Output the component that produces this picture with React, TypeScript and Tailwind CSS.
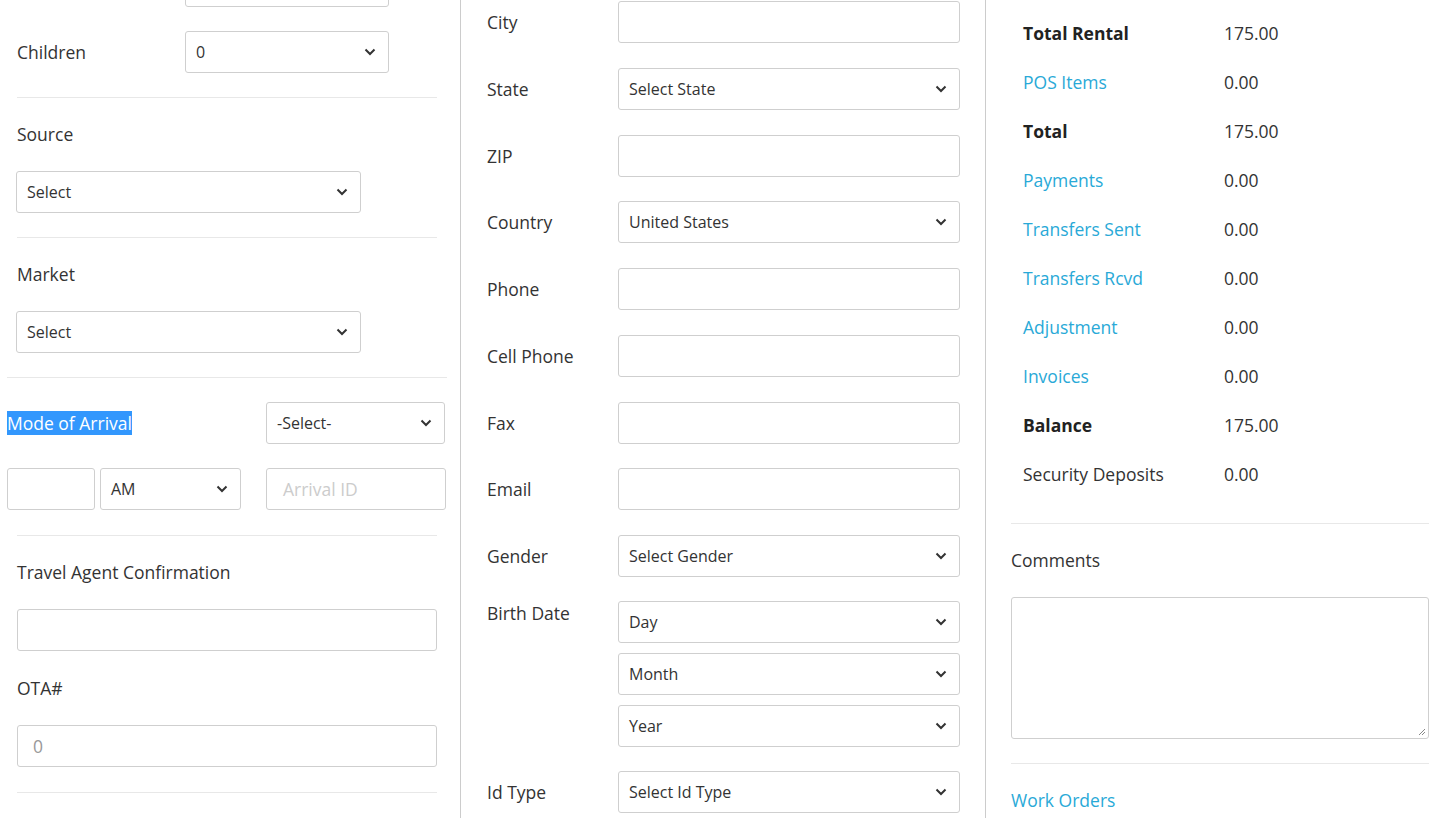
import React from "react";

const font = { fontFamily: '"Open Sans", "Liberation Sans", sans-serif' };

function Chevron() {
  return (
    <svg width="12" height="8" viewBox="0 0 12 8" className="shrink-0">
      <path d="M1.5 1.5 L6 6 L10.5 1.5" fill="none" stroke="#333" strokeWidth="2" />
    </svg>
  );
}

function Select({ value, className = "" }: { value: string; className?: string }) {
  return (
    <div
      className={`flex h-[42px] items-center justify-between rounded-[3px] border border-[#cfcfcf] bg-white pl-[10px] pr-[12px] text-[16px] text-[#333] ${className}`}
    >
      <span>{value}</span>
      <Chevron />
    </div>
  );
}

function Input({ placeholder = "", className = "", tone = "text-[#ccc]" }: { placeholder?: string; className?: string; tone?: string }) {
  return (
    <div
      className={`flex h-[42px] items-center rounded-[3px] border border-[#cfcfcf] bg-white px-[15px] text-[17.5px] ${tone} ${className}`}
    >
      {placeholder}
    </div>
  );
}

function Section({ label, children }: { label: string; children: React.ReactNode }) {
  return (
    <div className="border-t border-[#e8e8e8] pt-[24px] pb-[24px]">
      <div className="h-[24px] leading-[24px]">{label}</div>
      <div className="mt-[25px]">{children}</div>
    </div>
  );
}

function LeftColumn() {
  return (
    <div className="w-[461px] shrink-0 border-r border-[#cccccc] pl-[17px] pr-[23px]">
      <div className="-mt-[35px] flex items-center pb-[24px]">
        <div className="w-[168px]">Adults</div>
        <Select value="1" className="w-[204px]" />
      </div>
      <div className="flex items-center pb-[24px]">
        <div className="w-[168px]">Children</div>
        <Select value="0" className="w-[204px]" />
      </div>
      <Section label="Source">
        <Select value="Select" className="-ml-px w-[345px]" />
      </Section>
      <Section label="Market">
        <Select value="Select" className="-ml-px w-[345px]" />
      </Section>
      <div className="-mx-[10px] border-t border-[#e8e8e8] pt-[24px] pb-[25px]">
        <div className="flex items-center justify-between">
          <span className="bg-[#3297fd] leading-[24px] text-white">Mode of Arrival</span>
          <Select value="-Select-" className="mr-[2px] w-[179px]" />
        </div>
        <div className="mt-[24px] flex items-center">
          <Input className="w-[88px]" />
          <Select value="AM" className="ml-[5px] w-[141px]" />
          <Input placeholder="Arrival ID" className="ml-[25px] w-[180px] pl-[16px]" />
        </div>
      </div>
      <div className="border-t border-[#e8e8e8] pt-[24px] pb-[25px]">
        <div className="h-[24px] leading-[24px]">Travel Agent Confirmation</div>
        <Input className="mt-[25px]" />
        <div className="mt-[25px] h-[24px] leading-[24px]">OTA#</div>
        <Input placeholder="0" tone="text-[#999]" className="mt-[25px]" />
      </div>
      <div className="border-t border-[#e8e8e8]" />
    </div>
  );
}

function Row({ label, children, top = false, className = "" }: { label: string; children: React.ReactNode; top?: boolean; className?: string }) {
  return (
    <div className={`flex ${top ? "items-start" : "items-center"} ${className}`}>
      <div className="w-[131px] shrink-0 leading-[24px]">{label}</div>
      <div className="flex-1">{children}</div>
    </div>
  );
}

function MiddleColumn() {
  return (
    <div className="w-[525px] shrink-0 border-r border-[#cccccc] pl-[26px] pr-[25px]">
      <div className="flex flex-col gap-[24.75px] pt-[1px]">
        <Row label="City">
          <Input />
        </Row>
        <Row label="State">
          <Select value="Select State" />
        </Row>
        <Row label="ZIP">
          <Input />
        </Row>
        <Row label="Country">
          <Select value="United States" />
        </Row>
        <Row label="Phone">
          <Input />
        </Row>
        <Row label="Cell Phone">
          <Input />
        </Row>
        <Row label="Fax">
          <Input />
        </Row>
        <Row label="Email">
          <Input />
        </Row>
        <Row label="Gender">
          <Select value="Select Gender" />
        </Row>
        <Row label="Birth Date" top className="-mt-[1px]">
          <div className="flex flex-col gap-[10px]">
            <Select value="Day" />
            <Select value="Month" />
            <Select value="Year" />
          </div>
        </Row>
        <Row label="Id Type" className="-mt-[1px]">
          <Select value="Select Id Type" />
        </Row>
      </div>
    </div>
  );
}

const summary: { label: string; value: string; kind: "bold" | "link" | "plain" }[] = [
  { label: "Total Rental", value: "175.00", kind: "bold" },
  { label: "POS Items", value: "0.00", kind: "link" },
  { label: "Total", value: "175.00", kind: "bold" },
  { label: "Payments", value: "0.00", kind: "link" },
  { label: "Transfers Sent", value: "0.00", kind: "link" },
  { label: "Transfers Rcvd", value: "0.00", kind: "link" },
  { label: "Adjustment", value: "0.00", kind: "link" },
  { label: "Invoices", value: "0.00", kind: "link" },
  { label: "Balance", value: "175.00", kind: "bold" },
  { label: "Security Deposits", value: "0.00", kind: "plain" },
];

function RightColumn() {
  return (
    <div className="flex-1 pl-[25px] pr-[17px]">
      <div className="pt-[9px] pb-[24px] pl-[12px]">
        {summary.map((s) => (
          <div key={s.label} className="flex h-[49px] items-center">
            <div
              className={`w-[201px] ${
                s.kind === "bold" ? "font-bold text-[#222]" : s.kind === "link" ? "text-[#29a9d7]" : ""
              }`}
            >
              {s.label}
            </div>
            <div>{s.value}</div>
          </div>
        ))}
      </div>
      <div className="border-t border-[#e8e8e8] pt-[24px] pb-[24px]">
        <div className="h-[24px] leading-[24px]">Comments</div>
        <div className="relative mt-[25px] h-[142px] rounded-[3px] border border-[#cfcfcf] bg-white">
          <svg width="9" height="9" viewBox="0 0 9 9" className="absolute right-[2px] bottom-[2px]">
            <path d="M8 2 L2 8 M8 5 L5 8" stroke="#888" strokeWidth="1" />
          </svg>
        </div>
      </div>
      <div className="border-t border-[#e8e8e8] pt-[24px]">
        <div className="h-[24px] leading-[24px] text-[#29a9d7]">Work Orders</div>
      </div>
    </div>
  );
}

export default function App() {
  return (
    <div style={font} className="flex h-[818px] w-[1446px] overflow-hidden bg-white text-[17.5px] text-[#333]">
      <LeftColumn />
      <MiddleColumn />
      <RightColumn />
    </div>
  );
}
